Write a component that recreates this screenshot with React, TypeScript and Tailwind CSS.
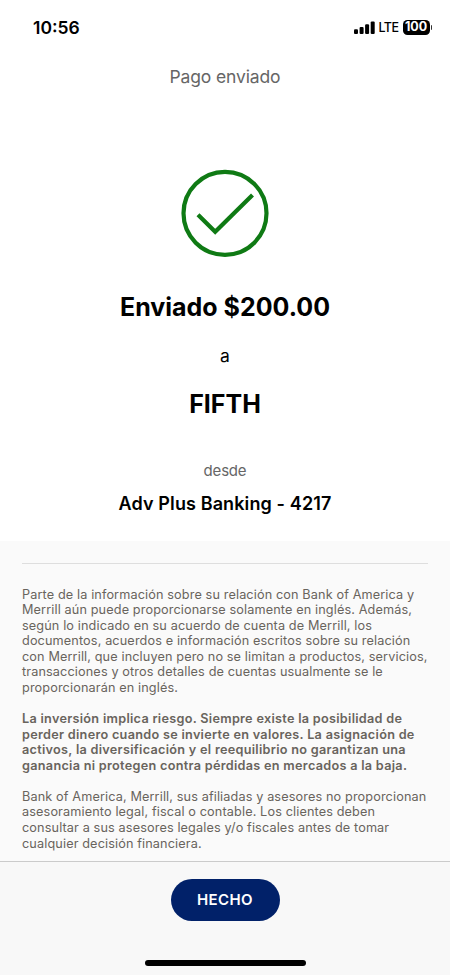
const disclosures = [
  {
    className: "font-normal tracking-[0.12px]",
    lines: [
      "Parte de la información sobre su relación con Bank of America y",
      "Merrill aún puede proporcionarse solamente en inglés. Además,",
      "según lo indicado en su acuerdo de cuenta de Merrill, los",
      "documentos, acuerdos e información escritos sobre su relación",
      "con Merrill, que incluyen pero no se limitan a productos, servicios,",
      "transacciones y otros detalles de cuentas usualmente se le",
      "proporcionarán en inglés.",
    ],
  },
  {
    className: "font-semibold tracking-[0.28px]",
    lines: [
      "La inversión implica riesgo. Siempre existe la posibilidad de",
      "perder dinero cuando se invierte en valores. La asignación de",
      "activos, la diversificación y el reequilibrio no garantizan una",
      "ganancia ni protegen contra pérdidas en mercados a la baja.",
    ],
  },
  {
    className: "font-normal tracking-[0.12px]",
    lines: [
      "Bank of America, Merrill, sus afiliadas y asesores no proporcionan",
      "asesoramiento legal, fiscal o contable. Los clientes deben",
      "consultar a sus asesores legales y/o fiscales antes de tomar",
      "cualquier decisión financiera.",
    ],
  },
];

function StatusBar() {
  return (
    <div className="flex h-[54px] items-center justify-between pl-[33px] pr-[18px]">
      <span className="pt-px text-[17.5px] font-semibold leading-5">10:56</span>
      <div className="flex items-center">
        <svg width="21" height="13" viewBox="0 0 21 13" aria-hidden="true">
          <rect x="0" y="8.3" width="4" height="4.7" rx="1.1" />
          <rect x="5.6" y="6" width="4" height="7" rx="1.1" />
          <rect x="11.1" y="3.3" width="4" height="9.7" rx="1.1" />
          <rect x="16.7" y="0.4" width="4" height="12.6" rx="1.1" />
        </svg>
        <span className="ml-[3px] pt-px text-[12.5px] font-medium leading-4 tracking-[-0.5px]">LTE</span>
        <div className="ml-1 flex h-[15px] w-[27px] items-center justify-center rounded-[4.5px] bg-black pt-px text-[12.5px] font-bold leading-none text-white">
          100
        </div>
        <div className="ml-px h-[5px] w-[1.5px] rounded-r-full bg-[#333]" />
      </div>
    </div>
  );
}

export default function App() {
  return (
    <div className="flex h-[975px] w-[450px] flex-col overflow-hidden bg-white font-[Inter,sans-serif] text-black">
      <StatusBar />
      <header className="flex h-[46px] items-center justify-center text-[17.5px] tracking-[-0.13px] text-[#666]">
        Pago enviado
      </header>
      <main className="flex h-[441px] flex-col items-center whitespace-nowrap pt-[69px]">
        <svg width="88" height="88" viewBox="0 0 88 88" fill="none" stroke="#0f7a14" strokeWidth="4.2" aria-hidden="true">
          <circle cx="44" cy="44.3" r="41.5" />
          <path d="M17 45.8 34.2 62.7 71.5 26" />
        </svg>
        <h1 className="mt-[34px] text-[25px] font-bold leading-8">Enviado $200.00</h1>
        <p className="mt-[21px] text-[17.5px] leading-6">a</p>
        <h2 className="mt-5 text-[25px] font-bold leading-8">FIFTH</h2>
        <p className="mt-[41px] text-[15px] leading-5 tracking-[-0.2px] text-[#666]">desde</p>
        <p className="mt-[11px] text-[18px] font-semibold leading-6 tracking-[0.12px]">Adv Plus Banking - 4217</p>
      </main>
      <section className="h-80 bg-[#fafafa] px-[22px] pt-[22px]">
        <div className="flex flex-col gap-[15.5px] whitespace-nowrap border-t border-[#dedede] pt-[22.5px] text-[12.7px] leading-[15.58px] text-[#69645d]">
          {disclosures.map((item) => (
            <p key={item.lines[0]} className={item.className}>
              {item.lines.map((line) => (
                <span key={line} className="block">{line}</span>
              ))}
            </p>
          ))}
        </div>
      </section>
      <footer className="flex flex-1 flex-col items-center border-t border-[#cbcbcb] bg-[#f8f8f8] pt-[17px]">
        <button className="h-[42px] w-[109px] rounded-full bg-[#012169] pt-px text-[15px] font-semibold tracking-[0.4px] text-white">
          HECHO
        </button>
        <div className="mt-[39px] h-[6px] w-[161px] rounded-full bg-black" />
      </footer>
    </div>
  );
}
